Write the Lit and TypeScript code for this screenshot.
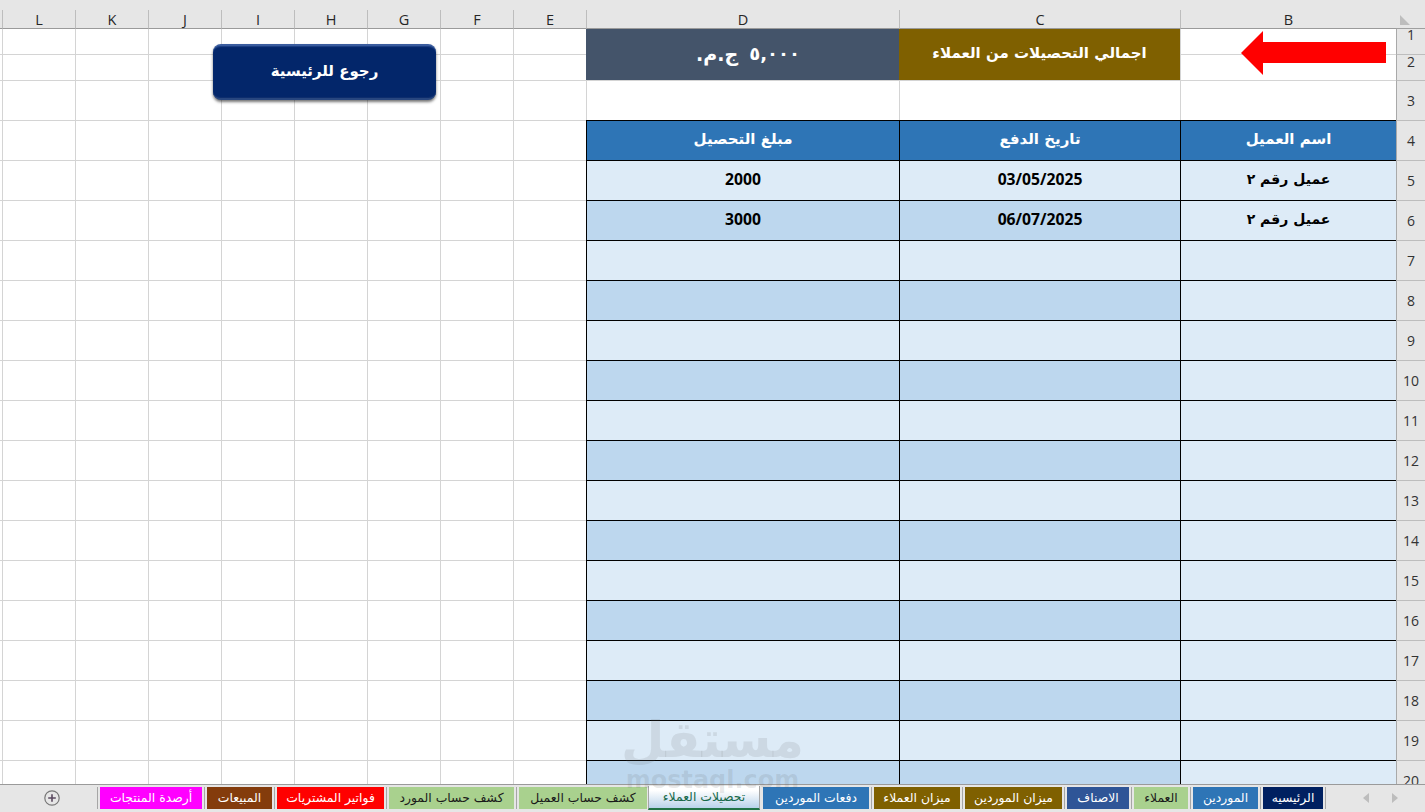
import { LitElement, html, css } from "lit";
import { customElement } from "lit/decorators.js";

const COLS = ["B", "C", "D", "E", "F", "G", "H", "I", "J", "K", "L"];
const PLAIN = ["E", "F", "G", "H", "I", "J", "K", "L"];
const TABS = [
  { t: "الرئيسيه", w: 60, c: "navy" },
  { t: "الموردين", w: 65, c: "blue" },
  { t: "العملاء", w: 54, c: "green" },
  { t: "الاصناف", w: 62, c: "indigo" },
  { t: "ميزان الموردين", w: 97, c: "gold" },
  { t: "ميزان العملاء", w: 86, c: "gold" },
  { t: "دفعات الموردين", w: 106, c: "blue" },
  { t: "تحصيلات العملاء", w: 112, c: "active" },
  { t: "كشف حساب العميل", w: 128, c: "green" },
  { t: "كشف حساب المورد", w: 125, c: "green" },
  { t: "فواتير المشتريات", w: 107, c: "red" },
  { t: "المبيعات", w: 65, c: "brown" },
  { t: "أرصدة المنتجات", w: 102, c: "magenta" },
];
const DATA: Record<number, string[]> = {
  5: ["عميل رقم ٢", "03/05/2025", "2000"],
  6: ["عميل رقم ٢", "06/07/2025", "3000"],
};

@customElement("app-root")
export class AppRoot extends LitElement {
  static styles = css`
    :host { display: block; position: relative; width: 1425px; height: 812px; overflow: hidden; background: #e6e6e6; font-family: "Open Sans", "DejaVu Sans", sans-serif; }
    .strip { height: 10px; background: #e6e6e6; }
    .viewport { height: 774px; overflow: hidden; background: #fff; }
    .sheet { direction: rtl; display: grid; grid-template-columns: 29px 216px 281px 313px repeat(8, 73px) 2px; grid-template-rows: 19px 25px 26px 40px; grid-auto-rows: 40px; }
    .sheet > div { box-sizing: border-box; min-width: 0; }
    .corner { background: #e6e6e6; border-bottom: 1px solid #9f9f9f; display: flex; align-items: flex-start; padding: 5px 15px 0 0; }
    .ch { background: #e6e6e6; border-bottom: 1px solid #9a9a9a; border-left: 1px solid #bdbdbd; font-size: 14.5px; line-height: 19px; color: #262626; text-align: center; }
    .rn { background: #e6e6e6; border-left: 1px solid #a9a9a9; border-top: 1px solid #bdbdbd; font-size: 14px; color: #333; display: flex; align-items: center; justify-content: center; }
    .rn.first { border-top: 0; align-items: flex-start; line-height: 12px; }
    .rn.second { align-items: flex-start; line-height: 14px; }
    .c { background: #fff; border-left: 1px solid #d4d4d4; border-top: 1px solid #d4d4d4; }
    .tail { background: #fff; border-top: 1px solid #d4d4d4; }
    .tail.head { background: #e6e6e6; border-top: 0; border-bottom: 1px solid #9a9a9a; }
    .nt { border-top: 0; }
    .merged { grid-row: span 2; display: flex; align-items: center; justify-content: center; color: #fff; font-family: "DejaVu Sans", sans-serif; font-weight: 700; }
    .title { background: #7f6000; font-size: 15px; padding-bottom: 3px; }
    .total { background: #44546a; font-size: 19px; padding-left: 11px; gap: 11px; padding-bottom: 2px; }
    .digits { direction: ltr; letter-spacing: 13px; font-size: 18px; }
    .t { border-left: 1px solid #000; border-top: 1px solid #000; display: flex; align-items: center; justify-content: center; font-weight: 700; color: #000; font-size: 15.7px; padding-bottom: 4px; font-family: "Open Sans", "DejaVu Sans", sans-serif; }
    .name { font-size: 14px; font-family: "DejaVu Sans", sans-serif; padding-bottom: 3px; }
    .th { background: #2e75b6; color: #fff; font-size: 15px; padding-bottom: 3px; font-family: "DejaVu Sans", sans-serif; }
    .l { background: #ddebf7; }
    .d { background: #bdd7ee; }
    .arrow { position: absolute; left: 1241px; top: 31px; width: 145px; height: 44px; }
    .btn { position: absolute; left: 213px; top: 44px; width: 223px; height: 56px; box-sizing: border-box; border-radius: 8px; background: #03266a; border-top: 2px solid #3a5c9e; border-bottom: 2px solid #28467f; box-shadow: inset 0 1px 1px #1e4285, inset 0 -1px 1px #0f2f6e, 0 2px 3px rgba(0,0,0,.55); color: #fff; display: flex; align-items: center; justify-content: center; direction: rtl; font-family: "DejaVu Sans", sans-serif; font-weight: 700; font-size: 15px; padding-bottom: 3px; }
    .wm { position: absolute; left: 620px; top: 712px; width: 185px; direction: rtl; text-align: center; color: rgba(90,90,90,.13); font-family: "DejaVu Sans", sans-serif; font-weight: 700; pointer-events: none; }
    .wm1 { font-size: 50px; line-height: 56px; }
    .wm2 { font-size: 24px; line-height: 24px; direction: ltr; }
    .tabs { height: 28px; box-sizing: border-box; border-top: 1px solid #9a9a9a; background: #e6e6e6; display: flex; direction: rtl; align-items: flex-start; padding-top: 2px; position: relative; }
    .nav { width: 97px; height: 22px; flex: none; display: flex; align-items: center; justify-content: flex-start; gap: 23px; padding-right: 27px; box-sizing: border-box; }
    .sep { flex: none; width: 1px; height: 22px; margin: 0 2px; background: #a6a6a6; }
    .tab { flex: none; height: 22px; box-sizing: border-box; display: flex; align-items: center; justify-content: center; font-family: "DejaVu Sans", sans-serif; font-size: 12.4px; white-space: nowrap; color: #fff; padding-bottom: 2px; }
    .navy { background: #002060; }
    .blue { background: #2e75b6; }
    .indigo { background: #2f5597; }
    .gold { background: #7f6000; }
    .green { background: #a9d18e; color: #1a1a1a; }
    .red { background: #ff0000; }
    .brown { background: #843c0c; }
    .magenta { background: #ff00ff; }
    .active { margin: -1px 3px 0 1px; height: 24px; color: #17694a; background: linear-gradient(#ffffff 20%, #b9d3ea); border: 1px solid #a6a6a6; border-top: 0; border-bottom: 2px solid #217346; }
    .plus { position: absolute; left: 44px; top: 5px; width: 16px; height: 16px; }
  `;

  private row(r: number) {
    const light = r % 2 === 1;
    const vals = DATA[r] ?? ["", "", ""];
    return html`
      <div class="rn">${r}</div>
      <div class="t l name">${vals[0]}</div>
      <div class="t ${light ? "l" : "d"}">${vals[1]}</div>
      <div class="t ${light ? "l" : "d"}">${vals[2]}</div>
      ${PLAIN.map(() => html`<div class="c"></div>`)}
      <div class="tail"></div>
    `;
  }

  render() {
    const rows = Array.from({ length: 16 }, (_, i) => i + 5);
    return html`
      <div class="strip"></div>
      <div class="viewport">
        <div class="sheet">
          <div class="corner">
            <svg width="10" height="10" viewBox="0 0 10 10"><polygon points="0,0 0,10 10,10" fill="#bdbdbd"></polygon></svg>
          </div>
          ${COLS.map((c) => html`<div class="ch">${c}</div>`)}
          <div class="tail head"></div>

          <div class="rn first">1</div>
          <div class="c nt"></div>
          <div class="merged title">اجمالي التحصيلات من العملاء</div>
          <div class="merged total"><span class="digits">٥,٠٠٠</span><span>ج.م.</span></div>
          ${PLAIN.map(() => html`<div class="c nt"></div>`)}
          <div class="tail nt"></div>

          <div class="rn second">2</div>
          <div class="c"></div>
          ${PLAIN.map(() => html`<div class="c"></div>`)}
          <div class="tail"></div>

          <div class="rn">3</div>
          <div class="c"></div>
          <div class="c"></div>
          <div class="c"></div>
          ${PLAIN.map(() => html`<div class="c"></div>`)}
          <div class="tail"></div>

          <div class="rn">4</div>
          <div class="t th">اسم العميل</div>
          <div class="t th">تاريخ الدفع</div>
          <div class="t th">مبلغ التحصيل</div>
          ${PLAIN.map(() => html`<div class="c"></div>`)}
          <div class="tail"></div>

          ${rows.map((r) => this.row(r))}
        </div>
      </div>
      <div class="tabs">
        <div class="nav">
          <svg width="6" height="10" viewBox="0 0 6 10"><polygon points="0,0 6,5 0,10" fill="#bdbdbd"></polygon></svg>
          <svg width="6" height="10" viewBox="0 0 6 10"><polygon points="6,0 0,5 6,10" fill="#bdbdbd"></polygon></svg>
        </div>
        <div class="sep"></div>
        ${TABS.map((tab, i) => html`
          <div class="tab ${tab.c}" style="width:${tab.w}px">${tab.t}</div>
          ${tab.c === "active" || TABS[i + 1]?.c === "active" ? "" : html`<div class="sep"></div>`}
        `)}
        <svg class="plus" viewBox="0 0 16 16">
          <circle cx="8" cy="8" r="7.2" fill="none" stroke="#777" stroke-width="1.2"></circle>
          <path d="M8 4.2V11.8M4.2 8H11.8" stroke="#5b4a60" stroke-width="1.6" fill="none"></path>
        </svg>
      </div>
      <svg class="arrow" viewBox="0 0 145 44">
        <polygon points="0,22 22,0 22,11 145,11 145,32 22,32 22,44" fill="#ff0000"></polygon>
      </svg>
      <div class="btn">رجوع للرئيسية</div>
      <div class="wm"><div class="wm1">مستقل</div><div class="wm2">mostaql.com</div></div>
    `;
  }
}
